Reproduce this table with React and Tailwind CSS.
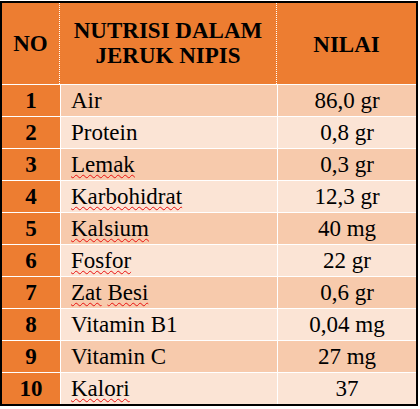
const rows = [
  { no: 1, name: ['Air'], value: '86,0 gr', typo: false },
  { no: 2, name: ['Protein'], value: '0,8 gr', typo: false },
  { no: 3, name: ['Lemak'], value: '0,3 gr', typo: true },
  { no: 4, name: ['Karbohidrat'], value: '12,3 gr', typo: true },
  { no: 5, name: ['Kalsium'], value: '40 mg', typo: true },
  { no: 6, name: ['Fosfor'], value: '22 gr', typo: true },
  { no: 7, name: ['Zat', 'Besi'], value: '0,6 gr', typo: true },
  { no: 8, name: ['Vitamin B1'], value: '0,04 mg', typo: false },
  { no: 9, name: ['Vitamin C'], value: '27 mg', typo: false },
  { no: 10, name: ['Kalori'], value: '37', typo: true },
];

export default function App() {
  return (
    <div className="w-[420px] h-[409px] bg-white pt-px font-['Liberation_Serif','Times_New_Roman',serif] text-black">
      <div className="w-[418px] border-2 border-black">
        {/* header */}
        <div className="flex h-[81px] bg-[#ED7D31] font-bold text-[23px] leading-[25px]">
          <div className="w-[58px] flex items-center justify-center border-r border-dotted border-white">NO</div>
          <div className="w-[217px] flex items-center justify-center text-center border-r border-dotted border-white pb-[2px]">
            NUTRISI DALAM<br />JERUK NIPIS
          </div>
          <div className="flex-1 flex items-center justify-center pt-[2px]">NILAI</div>
        </div>

        {/* body rows */}
        {rows.map((r, i) => (
          <div key={r.no} className={`flex h-[32px] border-t border-white text-[23px] leading-[29px] ${i % 2 === 0 ? 'bg-[#F7CAAC]' : 'bg-[#FBE4D5]'}`}>
            <div className="w-[58px] bg-[#ED7D31] font-bold flex items-center justify-center">{r.no}</div>
            <div className="w-[217px] border-l border-white pl-[10px] flex items-center">
              {r.name.map((w, j) => (
                <span key={j} className="flex">
                  {j > 0 && <span>&nbsp;</span>}
                  <span className={r.typo ? 'underline decoration-wavy decoration-[#e8100f] decoration-1 underline-offset-2' : ''}>{w}</span>
                </span>
              ))}
            </div>
            <div className="flex-1 border-l border-white flex items-center justify-center">{r.value}</div>
          </div>
        ))}
      </div>
    </div>
  );
}
